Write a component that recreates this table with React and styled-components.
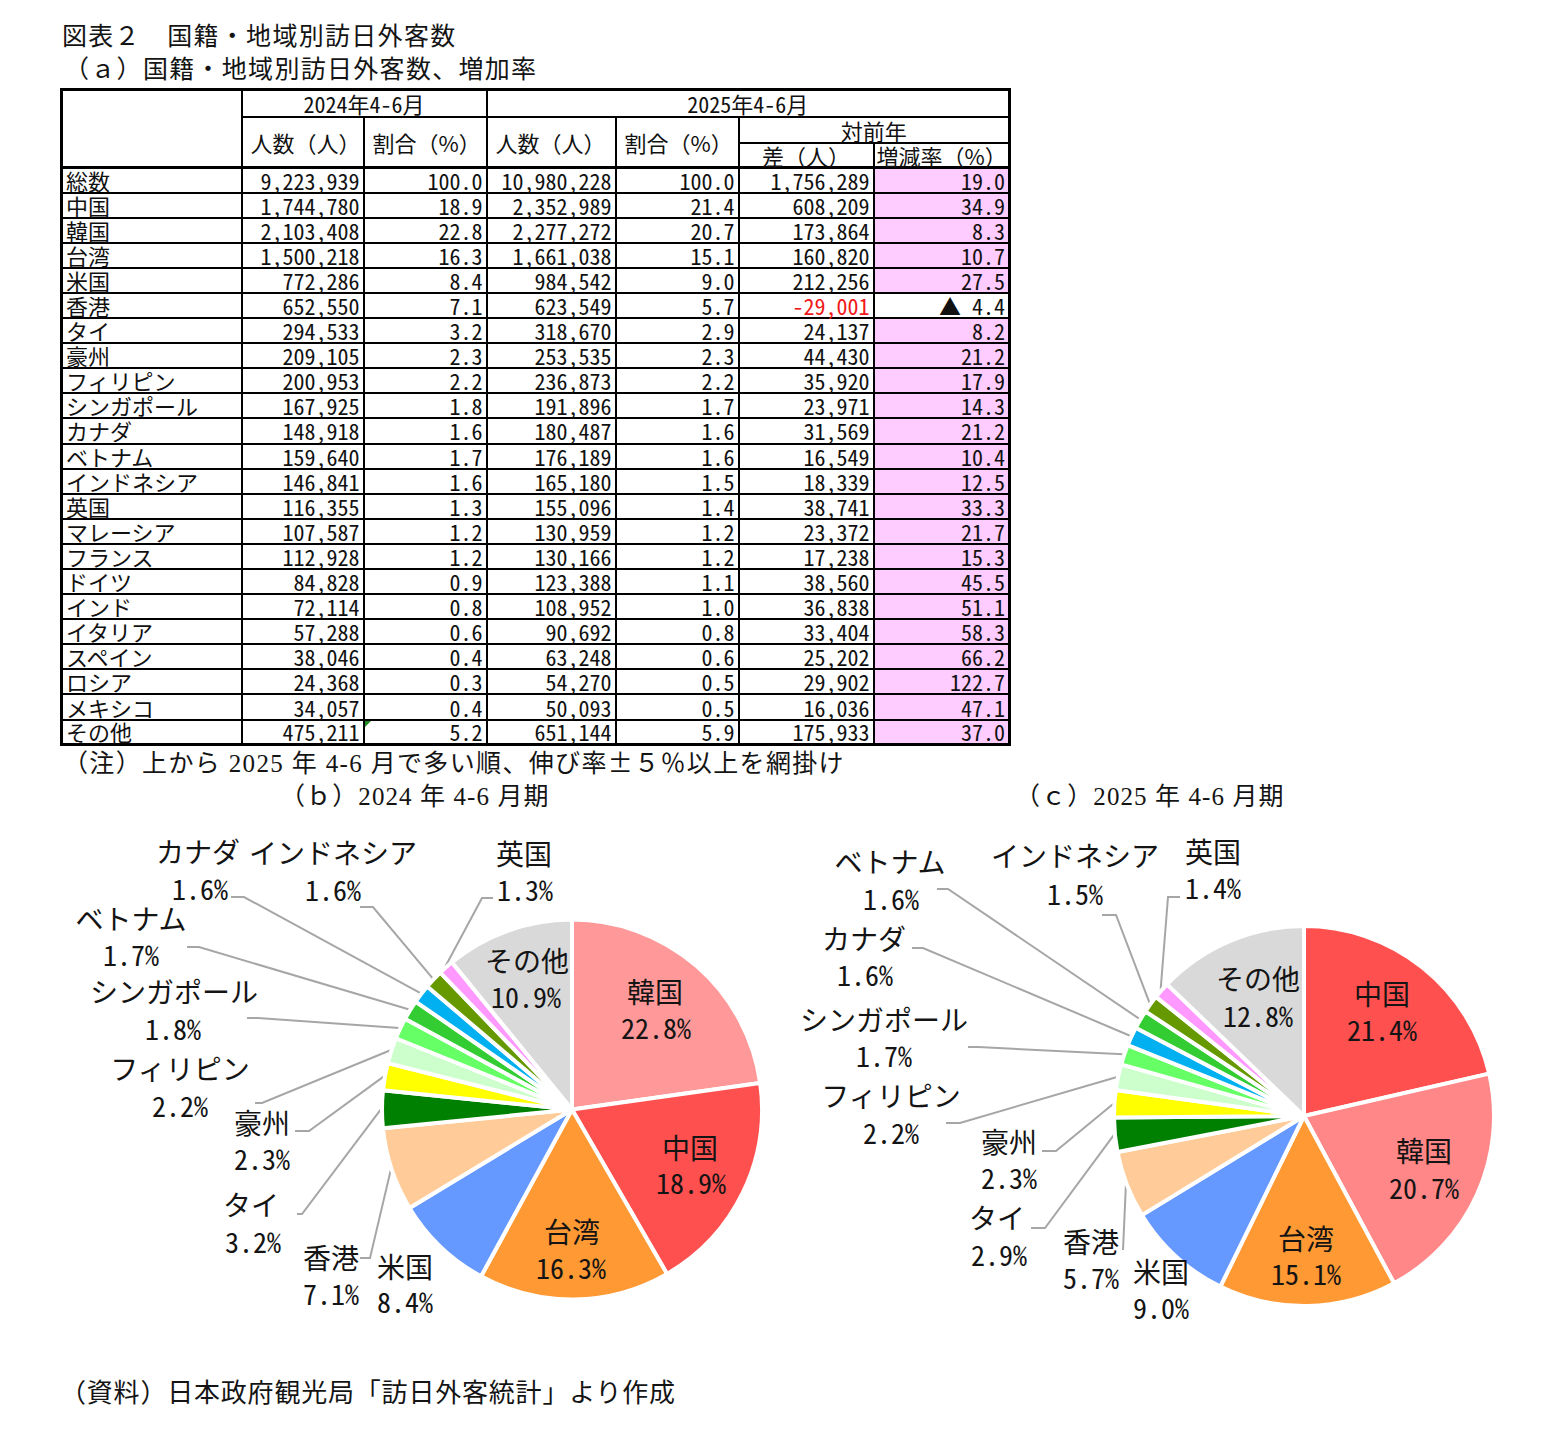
import React from "react";
import styled, { createGlobalStyle } from "styled-components";

const GlobalStyle = createGlobalStyle`
  html, body { margin: 0; padding: 0; background: #fff; }
  body { font-family: "Noto Sans CJK JP", sans-serif; color: #000; }
`;

const Page = styled.div`
  width: 1550px;
  min-height: 1444px;
  box-sizing: border-box;
  padding: 20px 0 0 60px;
  display: flex;
  flex-direction: column;
`;

const Title = styled.div`
  margin: 0;
  padding-left: ${(p) => p.$indent || 2}px;
  font-family: "Liberation Serif", "Noto Sans CJK JP", serif;
  font-size: 25px;
  line-height: ${(p) => p.$lh || 34}px;
  letter-spacing: 1.3px;
  color: #141414;
  white-space: pre;
`;

const Table = styled.table`
  margin-top: 2px;
  border-collapse: collapse;
  table-layout: fixed;
  width: 948px;
  border: 3px solid #000;
  font-family: "Noto Sans CJK JP", sans-serif;
  font-size: 22px;
  color: #111;
`;

const HeadRow = styled.tr`
  height: ${(p) => p.$h}px;
`;

const Th = styled.th`
  border: 2px solid #000;
  border-bottom-width: ${(p) => (p.$last ? 3 : 2)}px;
  font-weight: 400;
  padding: 0 ${(p) => (p.$align === "left" ? 8 : 2)}px;
  text-align: ${(p) => p.$align || "center"};
  vertical-align: middle;
  white-space: nowrap;
  line-height: 22px;
  font-feature-settings: ${(p) => (p.$num ? '"hwid" 1' : "normal")};
`;

const Row = styled.tr`
  height: 25.1px;
`;

const Td = styled.td`
  position: relative;
  border: 2px solid #000;
  padding: 0 3px;
  line-height: 21px;
  text-align: ${(p) => (p.$left ? "left" : "right")};
  background: ${(p) => (p.$hl ? "#FFCCFF" : "#fff")};
  color: ${(p) => (p.$neg ? "#F01818" : "#111")};
  white-space: nowrap;
  vertical-align: middle;
  font-feature-settings: "hwid" 1;

  &::before {
    content: "";
    display: ${(p) => (p.$flag ? "block" : "none")};
    position: absolute;
    left: 0;
    top: 0;
    border-style: solid;
    border-width: 6px 6px 0 0;
    border-color: #1f8a1f transparent transparent transparent;
  }
`;

const Note = styled.div`
  height: 32px;
  padding-left: 3px;
  font-family: "Liberation Serif", "Noto Sans CJK JP", serif;
  font-size: 25px;
  line-height: 30px;
  letter-spacing: 1.35px;
  color: #141414;
  white-space: pre;
`;

const Sym = styled.span`
  font-family: "Noto Sans CJK JP", sans-serif;
`;

const ChartRow = styled.div`
  display: grid;
  grid-template-columns: 730px 730px;
`;

const Panel = styled.div`
  display: flex;
  flex-direction: column;
`;

const Caption = styled.div`
  height: 38px;
  padding-left: ${(p) => p.$indent}px;
  font-family: "Liberation Serif", "Noto Sans CJK JP", serif;
  font-size: 25px;
  line-height: 38px;
  letter-spacing: 1.1px;
  color: #141414;
  white-space: pre;
`;

const ChartSvg = styled.svg`
  display: block;
  overflow: visible;
  text {
    font-family: "Noto Sans CJK JP", sans-serif;
    font-size: 28px;
    font-feature-settings: "hwid" 1;
    fill: #141414;
    text-anchor: middle;
    dominant-baseline: central;
  }
`;

const Footer = styled.div`
  margin-top: 28px;
  padding-left: 0;
  font-family: "Liberation Serif", "Noto Sans CJK JP", serif;
  font-size: 26px;
  line-height: 40px;
  letter-spacing: 0.8px;
  color: #141414;
  white-space: pre;
`;

const rows = [
  ["総数", "9,223,939", "100.0", "10,980,228", "100.0", "1,756,289", "19.0"],
  ["中国", "1,744,780", "18.9", "2,352,989", "21.4", "608,209", "34.9"],
  ["韓国", "2,103,408", "22.8", "2,277,272", "20.7", "173,864", "8.3"],
  ["台湾", "1,500,218", "16.3", "1,661,038", "15.1", "160,820", "10.7"],
  ["米国", "772,286", "8.4", "984,542", "9.0", "212,256", "27.5"],
  ["香港", "652,550", "7.1", "623,549", "5.7", "-29,001", "▲ 4.4"],
  ["タイ", "294,533", "3.2", "318,670", "2.9", "24,137", "8.2"],
  ["豪州", "209,105", "2.3", "253,535", "2.3", "44,430", "21.2"],
  ["フィリピン", "200,953", "2.2", "236,873", "2.2", "35,920", "17.9"],
  ["シンガポール", "167,925", "1.8", "191,896", "1.7", "23,971", "14.3"],
  ["カナダ", "148,918", "1.6", "180,487", "1.6", "31,569", "21.2"],
  ["ベトナム", "159,640", "1.7", "176,189", "1.6", "16,549", "10.4"],
  ["インドネシア", "146,841", "1.6", "165,180", "1.5", "18,339", "12.5"],
  ["英国", "116,355", "1.3", "155,096", "1.4", "38,741", "33.3"],
  ["マレーシア", "107,587", "1.2", "130,959", "1.2", "23,372", "21.7"],
  ["フランス", "112,928", "1.2", "130,166", "1.2", "17,238", "15.3"],
  ["ドイツ", "84,828", "0.9", "123,388", "1.1", "38,560", "45.5"],
  ["インド", "72,114", "0.8", "108,952", "1.0", "36,838", "51.1"],
  ["イタリア", "57,288", "0.6", "90,692", "0.8", "33,404", "58.3"],
  ["スペイン", "38,046", "0.4", "63,248", "0.6", "25,202", "66.2"],
  ["ロシア", "24,368", "0.3", "54,270", "0.5", "29,902", "122.7"],
  ["メキシコ", "34,057", "0.4", "50,093", "0.5", "16,036", "47.1"],
  ["その他", "475,211", "5.2", "651,144", "5.9", "175,933", "37.0"],
];

const COLORS = {
  中国: "#FF5050",
  台湾: "#FF9933",
  米国: "#6699FF",
  香港: "#FFCC99",
  タイ: "#008000",
  豪州: "#FFFF00",
  フィリピン: "#CCFFCC",
  シンガポール: "#66FF66",
  ベトナム: "#33CC33",
  カナダ: "#00B0F0",
  インドネシア: "#669900",
  英国: "#FF99FF",
  その他: "#D9D9D9",
};

const pie2024 = {
  cx: 512,
  cy: 293.5,
  r: 190,
  slices: [
    { name: "韓国", v: 22.8, color: "#FF9999", inside: [[595, 175], [596, 211]] },
    { name: "中国", v: 18.9, inside: [[630, 331], [631, 366]] },
    { name: "台湾", v: 16.3, inside: [[512, 415], [511, 451]] },
    { name: "米国", v: 8.4, out: [[345, 450], [345, 485]] },
    { name: "香港", v: 7.1, out: [[271, 441], [271, 477]], leader: [[300, 442], [310, 442]] },
    { name: "タイ", v: 3.2, out: [[191, 388], [193, 425]], leader: [[237, 398], [242, 398]] },
    { name: "豪州", v: 2.3, out: [[202, 306], [202, 342]], leader: [[235, 315], [249, 315]] },
    { name: "フィリピン", v: 2.2, out: [[120, 252], [120, 289]], leader: [[195, 287], [202, 287]] },
    { name: "シンガポール", v: 1.8, out: [[114, 175], [113, 212]], leader: [[187, 202], [198, 202]] },
    { name: "ベトナム", v: 1.7, out: [[71, 102], [71, 138]], leader: [[127, 131], [139, 131]] },
    { name: "カナダ", v: 1.6, out: [[138, 35], [140, 72]], leader: [[171, 81], [184, 81]] },
    { name: "インドネシア", v: 1.6, out: [[273, 36], [273, 73]], leader: [[300, 91], [313, 91]] },
    { name: "英国", v: 1.3, out: [[464, 37], [465, 73]], leader: [[433, 82], [422, 82]] },
    { name: "その他", v: 10.9, inside: [[467, 144], [466, 180]] },
  ],
};

const pie2025 = {
  cx: 514,
  cy: 300,
  r: 190,
  slices: [
    { name: "中国", v: 21.4, inside: [[592, 177], [592, 213]] },
    { name: "韓国", v: 20.7, color: "#FF8787", inside: [[634, 334], [634, 371]] },
    { name: "台湾", v: 15.1, inside: [[516, 422], [516, 457]] },
    { name: "米国", v: 9.0, out: [[371, 455], [371, 491]] },
    { name: "香港", v: 5.7, out: [[301, 425], [301, 461]], leader: [[333, 434]] },
    { name: "タイ", v: 2.9, out: [[207, 401], [209, 438]], leader: [[241, 412], [255, 412]] },
    { name: "豪州", v: 2.3, out: [[219, 325], [219, 361]], leader: [[252, 335], [266, 335]] },
    { name: "フィリピン", v: 2.2, out: [[101, 279], [101, 316]], leader: [[156, 307], [170, 307]] },
    { name: "シンガポール", v: 1.7, out: [[94, 203], [94, 239]], leader: [[178, 231], [188, 231]] },
    { name: "カナダ", v: 1.6, out: [[74, 122], [75, 158]], leader: [[122, 132], [133, 132]] },
    { name: "ベトナム", v: 1.6, out: [[100, 45], [101, 82]], leader: [[147, 73], [158, 73]] },
    { name: "インドネシア", v: 1.5, out: [[285, 39], [285, 77]], leader: [[312, 99], [326, 99]] },
    { name: "英国", v: 1.4, out: [[423, 35], [423, 71]], leader: [[390, 81], [378, 81]] },
    { name: "その他", v: 12.8, inside: [[468, 162], [468, 199]] },
  ],
};

const polar = (cx, cy, r, deg) => {
  const a = (deg * Math.PI) / 180;
  return [cx + r * Math.sin(a), cy - r * Math.cos(a)];
};

const slicePath = (cx, cy, r, a0, a1) => {
  const [x0, y0] = polar(cx, cy, r, a0);
  const [x1, y1] = polar(cx, cy, r, a1);
  const large = a1 - a0 > 180 ? 1 : 0;
  return `M${cx},${cy} L${x0.toFixed(2)},${y0.toFixed(2)} A${r},${r} 0 ${large} 1 ${x1.toFixed(2)},${y1.toFixed(2)} Z`;
};

function Pie({ cx, cy, r, slices }) {
  const total = slices.reduce((s, d) => s + d.v, 0);
  let acc = 0;
  const arcs = slices.map((d) => {
    const a0 = (acc / total) * 360;
    acc += d.v;
    const a1 = (acc / total) * 360;
    return { ...d, a0, a1, mid: (a0 + a1) / 2, pct: `${d.v.toFixed(1)}%` };
  });
  return (
    <ChartSvg width={730} height={530} viewBox="0 0 730 530">
      {arcs
        .filter((a) => a.leader)
        .map((a) => {
          const end = polar(cx, cy, r + 1, a.mid);
          const pts = [...a.leader, end].map((p) => p.join(",")).join(" ");
          return (
            <polyline key={`l-${a.name}`} points={pts} fill="none" stroke="#A6A6A6" strokeWidth="2" />
          );
        })}
      {arcs.map((a) => (
        <path
          key={a.name}
          d={slicePath(cx, cy, r, a.a0, a.a1)}
          fill={a.color || COLORS[a.name]}
          stroke="#fff"
          strokeWidth="4"
          strokeLinejoin="round"
        />
      ))}
      {arcs.map((a) => {
        const pos = a.inside || a.out;
        return (
          <g key={`t-${a.name}`}>
            <text x={pos[0][0]} y={pos[0][1]}>{a.name}</text>
            <text x={pos[1][0]} y={pos[1][1]}>{a.pct}</text>
          </g>
        );
      })}
    </ChartSvg>
  );
}

export default function App() {
  return (
    <>
      <GlobalStyle />
      <Page>
        <Title>図表２　国籍・地域別訪日外客数</Title>
        <Title $lh={32} $indent={4}>（ａ）国籍・地域別訪日外客数、増加率</Title>
        <Table>
          <colgroup>
            <col style={{ width: 180 }} />
            <col style={{ width: 122 }} />
            <col style={{ width: 123 }} />
            <col style={{ width: 129 }} />
            <col style={{ width: 123 }} />
            <col style={{ width: 135 }} />
            <col style={{ width: 136 }} />
          </colgroup>
          <thead>
            <HeadRow $h={27}>
              <Th rowSpan={3} $last />
              <Th colSpan={2} $num>2024年4-6月</Th>
              <Th colSpan={4} $num>2025年4-6月</Th>
            </HeadRow>
            <HeadRow $h={26}>
              <Th rowSpan={2} $align="left" $last>人数（人）</Th>
              <Th rowSpan={2} $align="left" $last>割合（%）</Th>
              <Th rowSpan={2} $align="left" $last>人数（人）</Th>
              <Th rowSpan={2} $align="left" $last>割合（%）</Th>
              <Th colSpan={2}>対前年</Th>
            </HeadRow>
            <HeadRow $h={25}>
              <Th $last>差（人）</Th>
              <Th $last>増減率（%）</Th>
            </HeadRow>
          </thead>
          <tbody>
            {rows.map((r) => (
              <Row key={r[0]}>
                <Td $left>{r[0]}</Td>
                <Td>{r[1]}</Td>
                <Td $flag={r[0] === "その他"}>{r[2]}</Td>
                <Td>{r[3]}</Td>
                <Td>{r[4]}</Td>
                <Td $neg={r[5].startsWith("-")}>{r[5]}</Td>
                <Td $hl={!r[6].startsWith("▲")}>{r[6]}</Td>
              </Row>
            ))}
          </tbody>
        </Table>
        <Note>
          （注）上から 2025 年 4-6 月で多い順、伸び率<Sym>±</Sym>５％以上を網掛け
        </Note>
        <ChartRow>
          <Panel>
            <Caption $indent={220}>（ｂ）2024 年 4-6 月期</Caption>
            <Pie {...pie2024} />
          </Panel>
          <Panel>
            <Caption $indent={225}>（ｃ）2025 年 4-6 月期</Caption>
            <Pie {...pie2025} />
          </Panel>
        </ChartRow>
        <Footer>（資料）日本政府観光局「訪日外客統計」より作成</Footer>
      </Page>
    </>
  );
}
